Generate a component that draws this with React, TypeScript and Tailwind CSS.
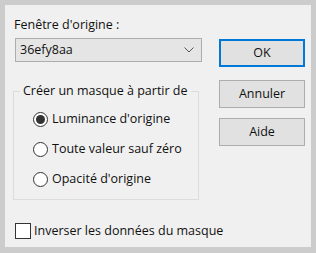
import { useState } from 'react';

const options = [
  { id: 'lum', label: "Luminance d'origine" },
  { id: 'nonzero', label: 'Toute valeur sauf zéro' },
  { id: 'opacity', label: "Opacité d'origine" },
];

export default function App() {
  const [mode, setMode] = useState('lum');
  const [invert, setInvert] = useState(false);

  return (
    <div
      className="w-[316px] h-[253px] bg-[#cccccc] pt-[5px] pl-[5px] pr-[5px] pb-[6px] text-[12.5px] leading-[16px] text-[#111] whitespace-nowrap"
      style={{ fontFamily: '"Open Sans", "Noto Sans", sans-serif' }}
    >
      <div className="h-full bg-[#f0f0f0] flex flex-col">
        <div className="flex">
          {/* Left column */}
          <div className="flex flex-col ml-[8px] w-[186px]">
            <div className="mt-[12px] ml-[1px]">Fenêtre d'origine :</div>
            <button className="mt-[5px] ml-[2px] w-[187px] h-[24px] bg-[#e5e5e5] border border-[#adadad] flex items-center justify-between pl-[4px] pr-[6px] text-left">
              <span>36efy8aa</span>
              <svg width="10" height="6" viewBox="0 0 10 6" className="mr-[1px] shrink-0">
                <path d="M0.5 0.5 L5 5 L9.5 0.5" fill="none" stroke="#555" strokeWidth="1" />
              </svg>
            </button>

            <fieldset className="mt-[21px] w-[186px] h-[117px] border border-[#dcdcdc] pl-[19px] pt-[12px]">
              <legend className="ml-[-13px] px-[3px]">Créer un masque à partir de</legend>
              <div className="flex flex-col gap-[14px]">
                {options.map((o) => (
                  <label key={o.id} className="flex items-center gap-[4px] cursor-default" onClick={() => setMode(o.id)}>
                    <span className="shrink-0 w-[15px] h-[15px] rounded-full border border-[#333] bg-white flex items-center justify-center">
                      {mode === o.id && <span className="w-[9px] h-[9px] rounded-full bg-[#333]" />}
                    </span>
                    <span>{o.label}</span>
                  </label>
                ))}
              </div>
            </fieldset>

            <label className="mt-[23px] ml-[2px] flex items-center gap-[3px] cursor-default" onClick={() => setInvert(!invert)}>
              <span className="shrink-0 w-[16px] h-[16px] border border-[#333] bg-white flex items-center justify-center text-[11px]">
                {invert ? '✓' : ''}
              </span>
              <span>Inverser les données du masque</span>
            </label>
          </div>

          {/* Buttons */}
          <div className="flex flex-col ml-[20px] mt-[34px] w-[86px]">
            <button className="h-[28px] bg-[#e1e1e1] border-2 border-[#0078d7]">OK</button>
            <button className="mt-[13px] h-[28px] bg-[#e1e1e1] border border-[#adadad]">Annuler</button>
            <button className="mt-[10px] h-[28px] bg-[#e1e1e1] border border-[#adadad]">Aide</button>
          </div>
        </div>
      </div>
    </div>
  );
}
